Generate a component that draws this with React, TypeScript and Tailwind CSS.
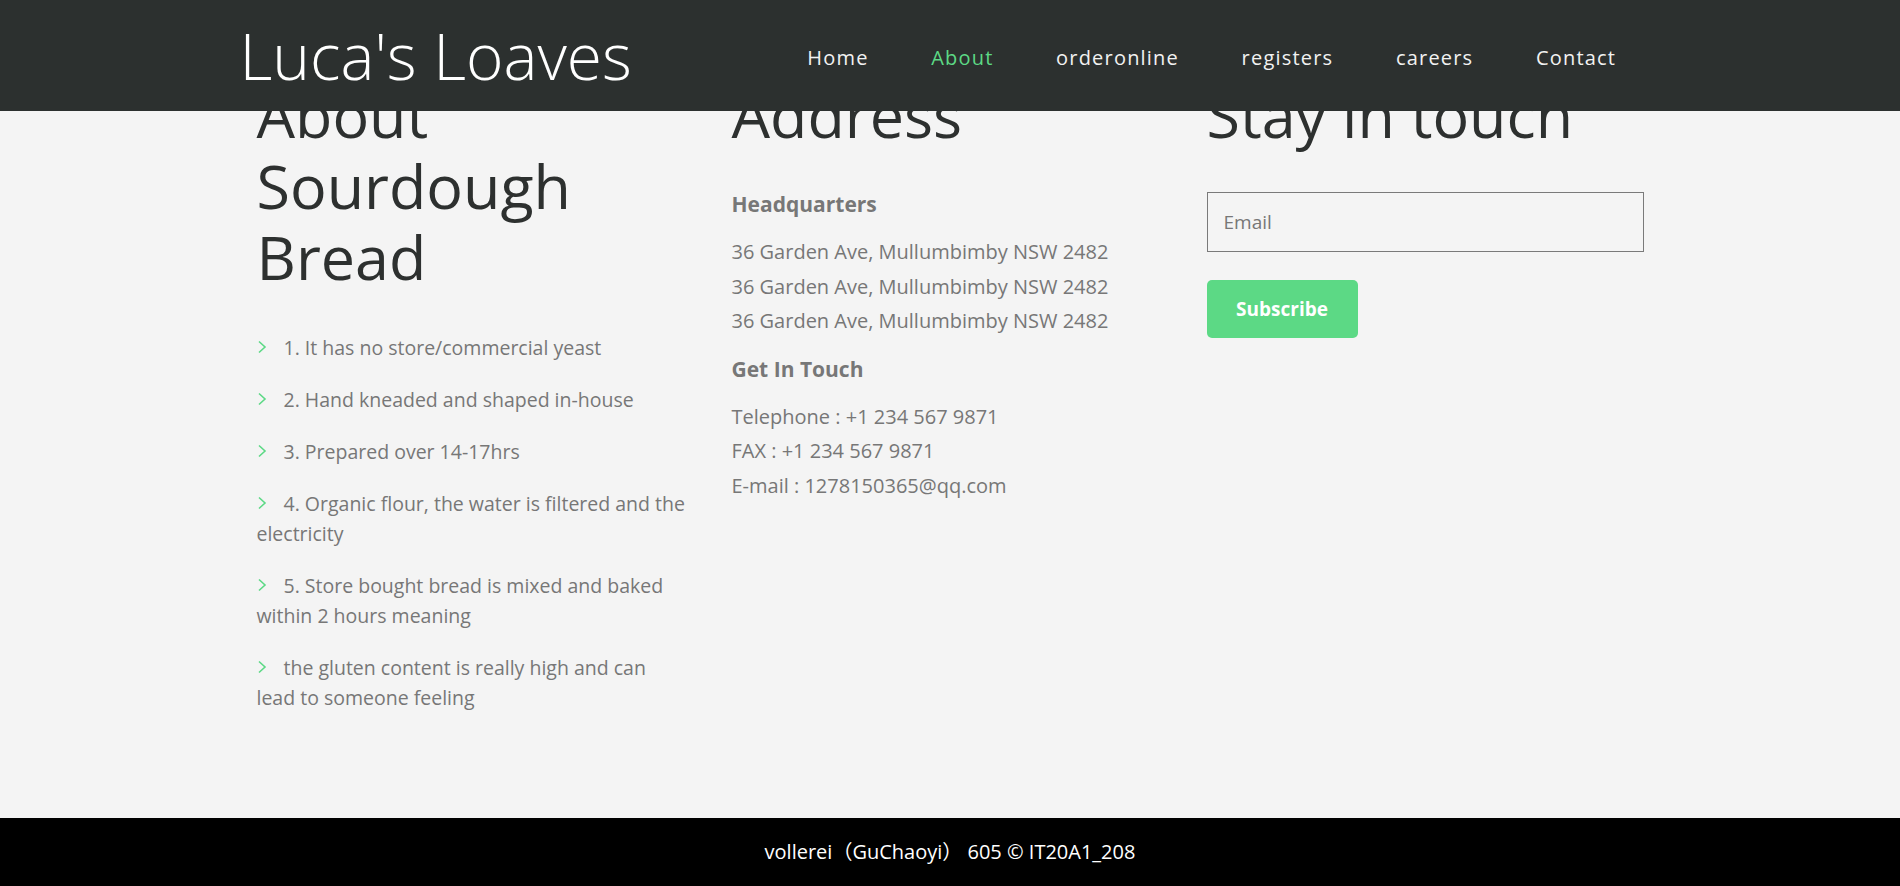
const navLinks = ["Home", "About", "orderonline", "registers", "careers", "Contact"];

const facts = [
  "1. It has no store/commercial yeast",
  "2. Hand kneaded and shaped in-house",
  "3. Prepared over 14-17hrs",
  "4. Organic flour, the water is filtered and the electricity",
  "5. Store bought bread is mixed and baked within 2 hours meaning",
  "the gluten content is really high and can lead to someone feeling",
];

const address = [
  "36 Garden Ave, Mullumbimby NSW 2482",
  "36 Garden Ave, Mullumbimby NSW 2482",
  "36 Garden Ave, Mullumbimby NSW 2482",
];

const contactLines = ["Telephone : +1 234 567 9871", "FAX : +1 234 567 9871", "E-mail : 1278150365@qq.com"];

function Chevron() {
  return (
    <svg width="10" height="14" viewBox="0 0 10 14" className="inline-block mr-[17px] -mt-[6px] align-middle">
      <polyline points="2,1.5 8,7 2,12.5" fill="none" stroke="#5cd985" strokeWidth="1.6" />
    </svg>
  );
}

function Header() {
  return (
    <header className="fixed top-0 inset-x-0 z-10 h-[111px] bg-[#2c302f]">
      <div className="w-[1425px] mx-auto h-full flex items-center justify-between pr-[15px]">
        <a className="ml-[2px] text-[64px] leading-none font-light text-white">Luca's Loaves</a>
        <ul className="flex items-center mt-[4px]">
          {navLinks.map((link) => (
            <li key={link} className="px-[31.3px]">
              <a
                className={
                  "text-[20px] tracking-[1.2px] " + (link === "About" ? "text-[#5cd985]" : "text-[#f2f2f2]")
                }
              >
                {link}
              </a>
            </li>
          ))}
        </ul>
      </div>
    </header>
  );
}

export default function App() {
  return (
    <div className="min-h-screen flex flex-col bg-[#f4f4f4] font-['Open_Sans','Noto_Sans_CJK_SC',sans-serif]">
      <Header />

      <main className="flex-1 pt-[79px]">
        <div className="w-[1425px] mx-auto grid grid-cols-3">
          <section className="pl-[19px] pr-[24px]">
            <h2 className="text-[61px] leading-[71px] text-[#2d302f]">
              About
              <br />
              Sourdough
              <br />
              Bread
            </h2>
            <ul className="mt-[41px] text-[19.5px] leading-[30px] text-[#777]">
              {facts.map((fact) => (
                <li key={fact} className="mb-[22px]">
                  <Chevron />
                  {fact}
                </li>
              ))}
            </ul>
          </section>

          <section className="px-[19px]">
            <h2 className="text-[61px] leading-[71px] text-[#2d302f]">Address</h2>
            <h4 className="mt-[39px] mb-[16px] text-[21px] leading-[30px] font-bold text-[#777]">Headquarters</h4>
            <div className="text-[20px] leading-[34.5px] text-[#777]">
              {address.map((line, i) => (
                <p key={i}>{line}</p>
              ))}
            </div>
            <h4 className="mt-[15px] mb-[16px] text-[21px] leading-[30px] font-bold text-[#777]">Get In Touch</h4>
            <div className="text-[20px] leading-[34.5px] text-[#777]">
              {contactLines.map((line) => (
                <p key={line}>{line}</p>
              ))}
            </div>
          </section>

          <section className="px-[19px]">
            <h2 className="text-[61px] leading-[71px] text-[#2d302f]">Stay in touch</h2>
            <form className="mt-[42px]" onSubmit={(e) => e.preventDefault()}>
              <input
                type="email"
                placeholder="Email"
                className="block w-full h-[60px] border border-[#7a7a7a] bg-transparent px-[16px] text-[19px] text-[#555] placeholder:text-[#777] outline-none"
              />
              <button
                type="submit"
                className="mt-[28px] w-[151px] h-[58px] rounded-[5px] bg-[#5cd985] text-white text-[19px] font-bold"
              >
                Subscribe
              </button>
            </form>
          </section>
        </div>
      </main>

      <footer className="h-[68px] bg-black flex items-center justify-center">
        <p className="text-[20px] text-white">vollerei（GuChaoyi） 605 © IT20A1_208</p>
      </footer>
    </div>
  );
}
